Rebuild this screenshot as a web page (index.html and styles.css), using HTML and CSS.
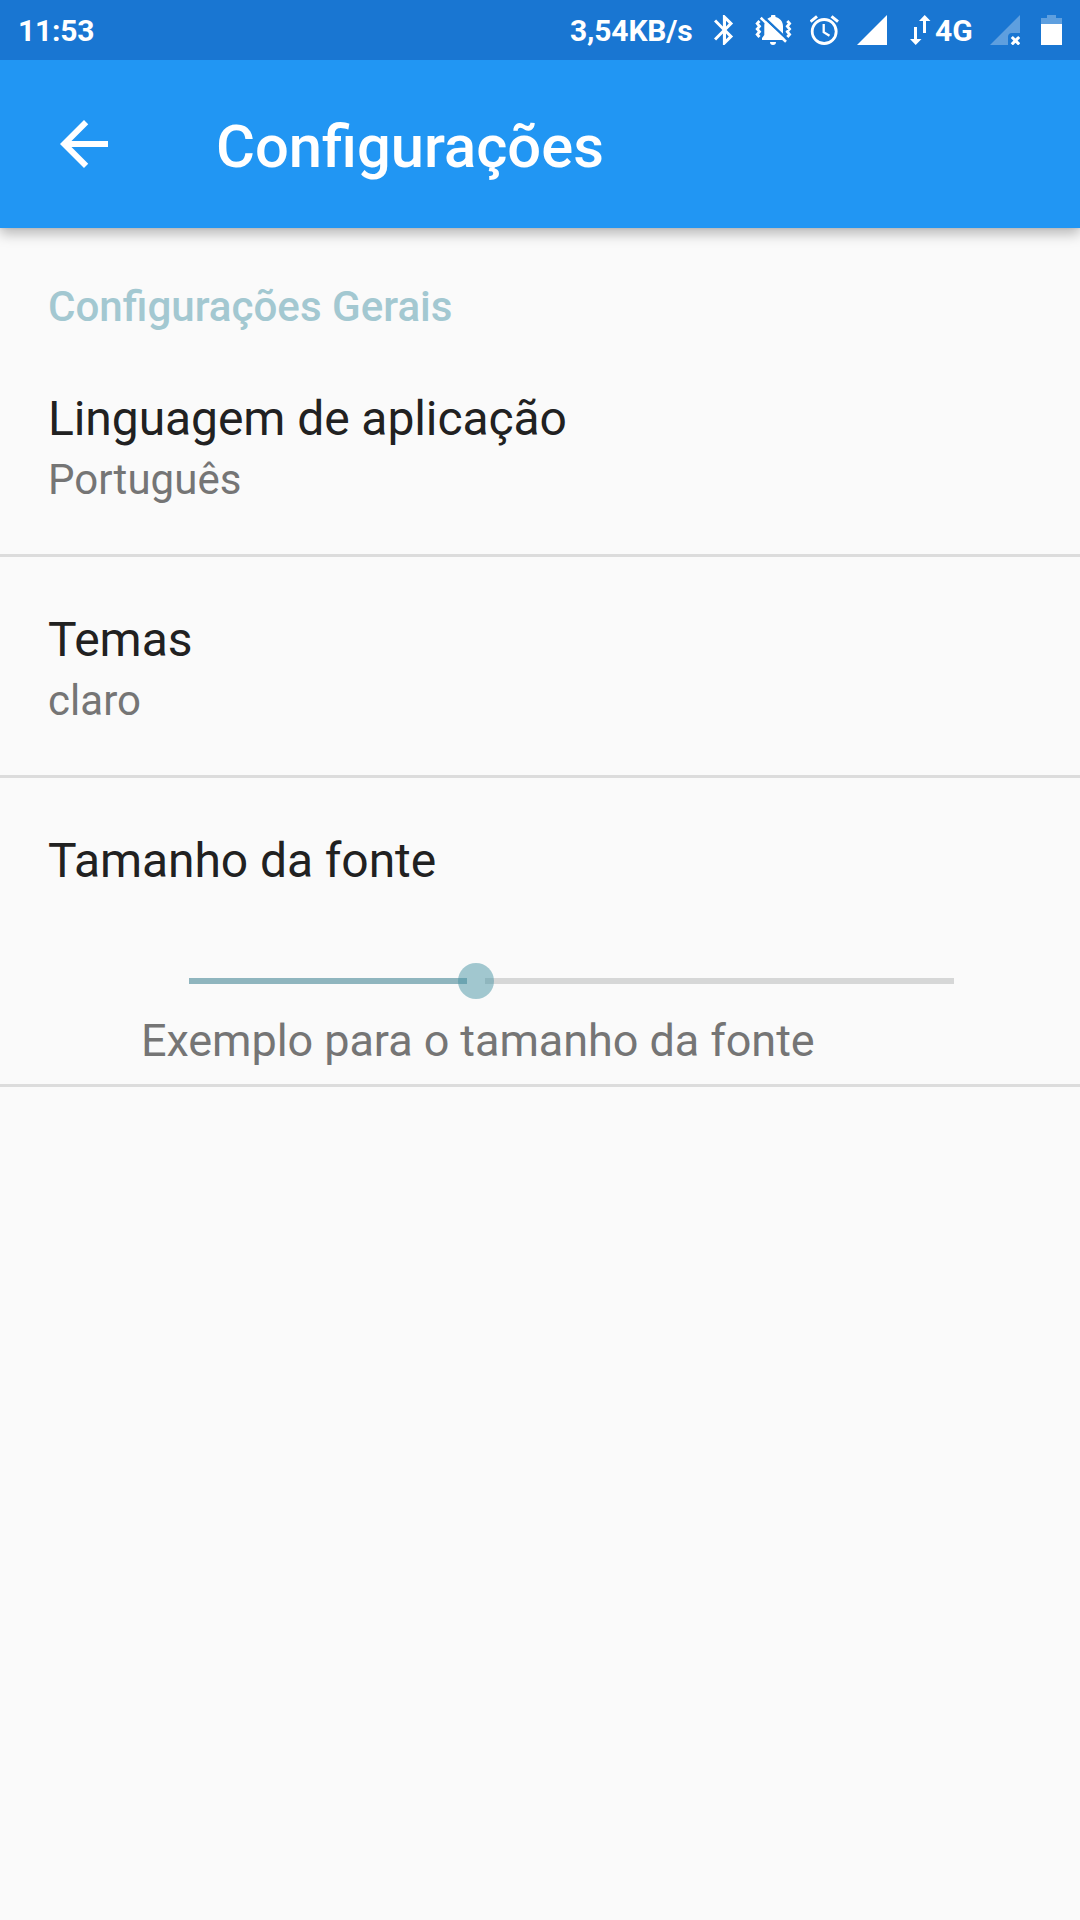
FILE: index.html
```html
<!DOCTYPE html>
<html lang="pt">
<head>
<meta charset="utf-8">
<title>Configurações</title>
<link rel="stylesheet" href="styles.css">
</head>
<body>
<div class="status-bar">
  <span class="clock">11:53</span>
  <div class="status-icons">
    <span class="speed">3,54KB/s</span>
    <svg class="bluetooth" width="20" height="30" viewBox="0 0 20 30"><path fill="#fff" d="M19.1 8.6 10.5 0H8.9v11.4L2.1 4.5 0 6.6 8.4 15 0 23.4l2.1 2.1 6.8-6.9V30h1.6l8.6-8.6-6.5-6.4zM12 5.8l2.8 2.8-2.8 2.8zm2.8 15.6L12 24.2v-5.6z"/></svg>
    <svg class="bell" width="37" height="30" viewBox="0 0 37 30">
      <path fill="#fff" d="M16 2V1.500a2 2 0 0 1 4.500 0V2c4.500 1 7.500 4.800 7.500 9.200v7l2 6.800H7v-2l2.300-3v-8.800C9.300 6.500 12 3 16 2zM15 27h6a3 3 0 0 1-6 0z"/>
      <path stroke="#1976d2" stroke-width="2.500" d="M6.500 0 33 25.200" fill="none"/>
      <path stroke="#fff" stroke-width="2.600" d="M5.700 2.700 31 26.700" fill="none"/>
      <path stroke="#fff" stroke-width="2.800" d="M4.500 6 2.200 8.600l2.300 2.700-2.300 2.700 2.300 2.700-2.300 2.700 2.300 2.600M32.300 6l2.300 2.600-2.300 2.700 2.300 2.700-2.300 2.700 2.300 2.700-2.300 2.600" fill="none"/>
    </svg>
    <svg class="alarm" width="30" height="30" viewBox="0 0 30 30" fill="none" stroke="#fff"><circle cx="14.200" cy="16.500" r="12" stroke-width="2.800"/><path stroke-width="2.300" d="M13.700 9v8.200l5.800 3.500"/><path stroke-width="3" d="M.500 6.700 7 1.300M21.500 1.300 28 6.700"/></svg>
    <svg class="signal" width="30" height="30" viewBox="0 0 30 30"><path fill="#fff" d="M0 30 30 0v30z"/></svg>
    <svg class="data" width="21" height="30" viewBox="0 0 21 30"><path fill="#fff" d="M4 12h3v12h4.500L5.700 30 0 24h4zM13 18V6H9l5.700-6 5.800 6H16v12z"/></svg>
    <span class="network">4G</span>
    <svg class="no-signal" width="30" height="30" viewBox="0 0 30 30"><path fill="#fff" fill-opacity=".3" d="M0 30 30 0v18h-8q-4 0-4 4v8z"/><path stroke="#fff" stroke-width="3" d="m21.800 22 7.400 7.400M29.200 22l-7.400 7.400"/></svg>
    <svg class="battery" width="21" height="30" viewBox="0 0 21 30"><path fill="#fff" fill-opacity=".3" d="M6 0h9v3h6v6H0V3h6z"/><path fill="#fff" d="M0 9h21v21H0z"/></svg>
  </div>
</div>
<header class="app-bar">
  <svg class="back" width="72" height="72" viewBox="0 0 24 24"><path fill="#fff" d="M20 11H7.830l5.590-5.590L12 4l-8 8 8 8 1.410-1.410L7.830 13H20z"/></svg>
  <h1 class="page-title">Configurações</h1>
</header>
<main class="settings">
  <h2 class="section-title">Configurações Gerais</h2>
  <section class="row">
    <div class="row-title">Linguagem de aplicação</div>
    <div class="row-summary">Português</div>
  </section>
  <section class="row">
    <div class="row-title">Temas</div>
    <div class="row-summary">claro</div>
  </section>
  <section class="row row-slider">
    <div class="row-title">Tamanho da fonte</div>
    <div class="slider">
      <div class="track-filled"></div>
      <div class="track-empty"></div>
      <div class="thumb"></div>
    </div>
    <div class="sample">Exemplo para o tamanho da fonte</div>
  </section>
</main>
</body>
</html>
```
FILE: styles.css
```css
body {
  margin: 0;
  min-height: 1920px;
  background: #fafafa;
  color: #212121;
  font-family: Roboto, sans-serif;
}

svg {
  display: block;
  flex: none;
}

.status-bar {
  position: relative;
  z-index: 1;
  display: flex;
  justify-content: space-between;
  height: 60px;
  box-sizing: border-box;
  padding: 13px 18px 0;
  background: #1976d2;
  color: #fff;
  font-size: 30px;
  font-weight: 700;
  line-height: 36px;
}

.clock {
  letter-spacing: -0.2px;
}

.status-icons {
  display: flex;
  align-items: flex-start;
}

.status-icons svg {
  margin-top: 2px;
}

.speed {
  width: 124px;
  margin-right: 20px;
  letter-spacing: -0.15px;
  white-space: nowrap;
}

.bluetooth { margin-right: 21px; }
.bell { margin-right: 18px; }
.alarm { margin-right: 17px; }
.signal { margin-right: 23px; }
.data { margin-right: 4px; }
.network { width: 38px; margin-right: 17px; }
.no-signal { margin-right: 21px; }

.app-bar {
  position: relative;
  display: flex;
  align-items: flex-start;
  height: 168px;
  box-sizing: border-box;
  padding: 48px 48px 0;
  background: #2196f3;
  color: #fff;
  box-shadow: 0 6px 12px rgba(0, 0, 0, 0.26), 0 0 3px rgba(0, 0, 0, 0.12);
}

.page-title {
  margin: 4px 0 0 96px;
  font-size: 59.7px;
  font-weight: 500;
  line-height: 70px;
}

.section-title {
  margin: 0;
  padding: 54px 48px 4px;
  color: #a3c8d1;
  font-size: 42.1px;
  font-weight: 500;
  line-height: 50px;
}

.row {
  padding: 55px 48px 49px;
  border-bottom: 3px solid #dcdcdc;
}

.row-title {
  font-size: 48px;
  letter-spacing: -0.08px;
  line-height: 56px;
}

.row-summary {
  margin-top: 8px;
  color: #757575;
  font-size: 42px;
  letter-spacing: 0.05px;
  line-height: 50px;
}

.row-slider {
  padding-bottom: 17px;
}

.slider {
  position: relative;
  display: flex;
  align-items: center;
  gap: 18px;
  width: 765px;
  height: 36px;
  margin: 74px 0 0 141px;
}

.track-filled {
  width: 278px;
  height: 6px;
  background: #8fb5be;
}

.track-empty {
  flex: 1;
  height: 6px;
  background: #d6d7d7;
}

.thumb {
  position: absolute;
  left: 269px;
  top: 0;
  width: 36px;
  height: 36px;
  border-radius: 50%;
  background: rgba(70, 146, 164, 0.49);
}

.sample {
  margin: 15px 0 0 93px;
  color: #757575;
  font-size: 45px;
  letter-spacing: -0.07px;
  line-height: 53px;
}
```
